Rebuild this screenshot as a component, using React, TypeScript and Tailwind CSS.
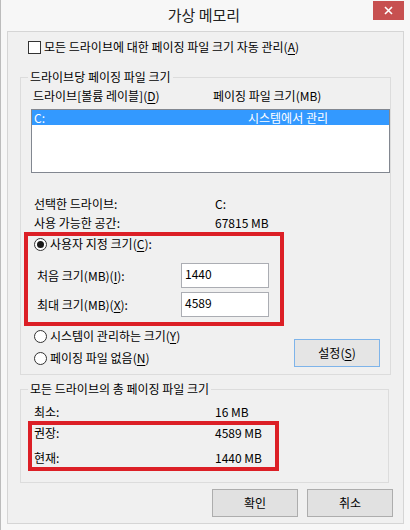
const font = { fontFamily: '"Noto Sans CJK KR", "Noto Sans", sans-serif' }

function Key({ children }: { children: string }) {
  return <span className="underline underline-offset-2">{children}</span>
}

function Radio({ checked }: { checked?: boolean }) {
  return (
    <span className="flex h-[13px] w-[13px] shrink-0 items-center justify-center rounded-full border border-[#333] bg-white">
      {checked && <span className="h-[7px] w-[7px] rounded-full bg-[#1a1a1a]" />}
    </span>
  )
}

function Button({ label, k, focused }: { label: string; k?: string; focused?: boolean }) {
  return (
    <button
      className={
        "flex h-[28px] w-[86px] items-center justify-center border bg-[#e1e1e1] text-[12px] leading-[16px] text-black " +
        (focused ? "border-[#7eb4ea] bg-[#e5e5e5]" : "border-[#adadad]")
      }
    >
      {label}
      {k && (
        <>
          (<Key>{k}</Key>)
        </>
      )}
    </button>
  )
}

function Input({ value }: { value: string }) {
  return (
    <div className="flex h-[25px] w-[88px] items-start border border-[#abadb3] bg-white pl-[3px] pt-[2px] text-[12px] leading-[16px]">
      {value}
    </div>
  )
}

export default function App() {
  return (
    <div className="h-[530px] w-[410px] overflow-hidden border-l border-[#bcbcbc] bg-[#f7f7f7] text-[12px] leading-[16px] text-black" style={font}>
      {/* title bar */}
      <div className="flex h-[31px]">
        <div className="flex-1 pl-[34px] pt-[5px] text-center text-[15px] leading-[20px] text-[#222]">가상 메모리</div>
        <div className="mr-[6px] mt-[1px] flex h-[19px] w-[31px] items-center justify-center bg-[#c75050]">
          <svg width="9" height="9" viewBox="0 0 9 9">
            <path d="M1 1 L8 8 M8 1 L1 8" stroke="#fff" strokeWidth="1.6" />
          </svg>
        </div>
      </div>

      {/* client area */}
      <div className="ml-[6px] h-[493px] w-[397px] border border-[#d5d5d5] bg-[#f0f0f0]">
        <div className="mt-[7px] flex items-center gap-[3px] pl-[20px]">
          <span className="h-[13px] w-[13px] border border-[#333] bg-white" />
          <span>
            모든 드라이브에 대한 페이징 파일 크기 자동 관리(<Key>A</Key>)
          </span>
        </div>

        <fieldset className="ml-[12px] mt-[14px] w-[369px] border border-[#dcdcdc] pb-[7px]">
          <legend className="ml-[7px] px-[2px] leading-[16px]">드라이브당 페이징 파일 크기</legend>
          <div className="mt-[3px] flex pl-[12px]">
            <span className="w-[180px]">
              드라이브[볼륨 레이블](<Key>D</Key>)
            </span>
            <span>페이징 파일 크기(MB)</span>
          </div>
          <div className="ml-[10px] mt-[5px] h-[64px] w-[359px] border border-[#828790] bg-white">
            <div className="flex h-[15px] items-center bg-[#3399ff] pl-[2px] text-white">
              <span className="w-[214px]">C:</span>
              <span>시스템에서 관리</span>
            </div>
          </div>

          <div className="mt-[23px] flex pl-[13px]">
            <span className="w-[181px]">선택한 드라이브:</span>
            <span>C:</span>
          </div>
          <div className="mt-[3px] flex pl-[13px]">
            <span className="w-[181px]">사용 가능한 공간:</span>
            <span>67815 MB</span>
          </div>

          <div className="ml-[7px] mt-[5px] h-[86px] w-[252px] outline-4 outline-[#dc1f26]">
            <div className="mt-[1px] flex items-center gap-[3px] pl-[6px]">
              <Radio checked />
              <span>
                사용자 지정 크기(<Key>C</Key>):
              </span>
            </div>
            <div className="mt-[11px] flex items-center pl-[9px]">
              <span className="w-[144px]">
                처음 크기(MB)(<Key>I</Key>):
              </span>
              <Input value="1440" />
            </div>
            <div className="mt-[4px] flex items-center pl-[9px]">
              <span className="w-[144px]">
                최대 크기(MB)(<Key>X</Key>):
              </span>
              <Input value="4589" />
            </div>
          </div>

          <div className="mt-[6px] flex pl-[13px]">
            <div className="flex w-[260px] flex-col gap-[6px]">
              <div className="flex items-center gap-[3px]">
                <Radio />
                <span>
                  시스템이 관리하는 크기(<Key>Y</Key>)
                </span>
              </div>
              <div className="flex items-center gap-[3px]">
                <Radio />
                <span>
                  페이징 파일 없음(<Key>N</Key>)
                </span>
              </div>
            </div>
            <div className="mt-[11px]">
              <Button label="설정" k="S" focused />
            </div>
          </div>
        </fieldset>

        <fieldset className="ml-[12px] mt-[6px] w-[369px] border border-[#dcdcdc] pb-[15px]">
          <legend className="ml-[7px] px-[2px] leading-[16px]">모든 드라이브의 총 페이징 파일 크기</legend>
          <div className="mt-[7px] flex pl-[13px]">
            <span className="w-[181px]">최소:</span>
            <span>16 MB</span>
          </div>
          <div className="ml-[11px] mt-[5px] h-[42px] w-[243px] outline-4 outline-[#dc1f26]">
            <div className="mt-[1px] flex pl-[2px]">
              <span className="w-[181px]">권장:</span>
              <span>4589 MB</span>
            </div>
            <div className="mt-[9px] flex pl-[2px]">
              <span className="w-[181px]">현재:</span>
              <span>1440 MB</span>
            </div>
          </div>
        </fieldset>

        <div className="mt-[6px] flex justify-end gap-[9px] pr-[10px]">
          <Button label="확인" />
          <Button label="취소" />
        </div>
      </div>
    </div>
  )
}
